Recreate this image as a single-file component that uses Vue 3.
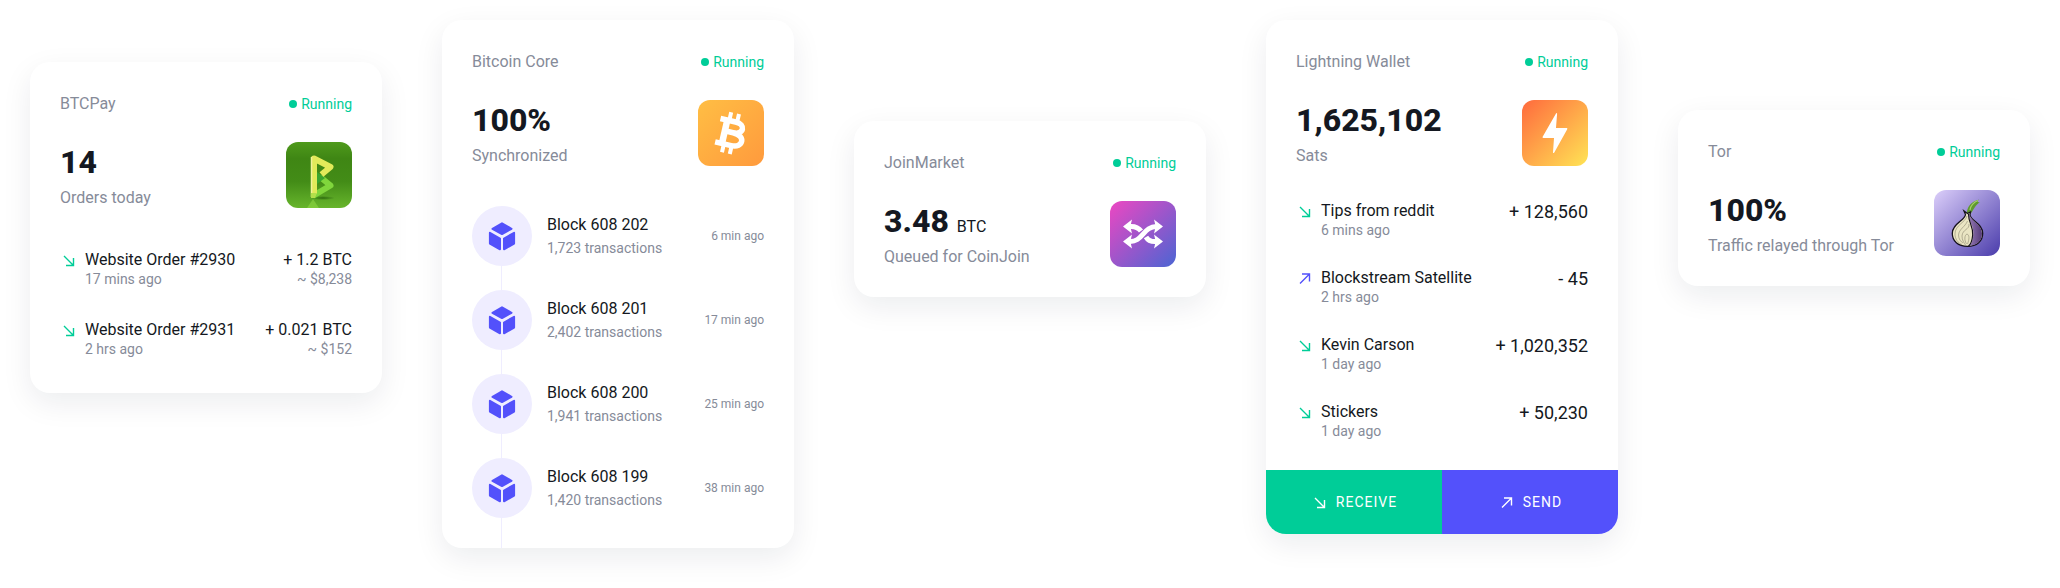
<script setup>
const orders = [
  { title: 'Website Order #2930', time: '17 mins ago', amount: '+ 1.2 BTC', fiat: '~ $8,238' },
  { title: 'Website Order #2931', time: '2 hrs ago', amount: '+ 0.021 BTC', fiat: '~ $152' },
]
const blocks = [
  { height: '608 202', count: '1,723', time: '6 min ago' },
  { height: '608 201', count: '2,402', time: '17 min ago' },
  { height: '608 200', count: '1,941', time: '25 min ago' },
  { height: '608 199', count: '1,420', time: '38 min ago' },
]
const payments = [
  { title: 'Tips from reddit', time: '6 mins ago', amount: '+ 128,560', incoming: true },
  { title: 'Blockstream Satellite', time: '2 hrs ago', amount: '- 45', incoming: false },
  { title: 'Kevin Carson', time: '1 day ago', amount: '+ 1,020,352', incoming: true },
  { title: 'Stickers', time: '1 day ago', amount: '+ 50,230', incoming: true },
]
const arrowIn = 'M4 4L13.5 13.5M13.5 6V13.5H6'
const arrowOut = 'M4 13.5L13.5 4M13.5 11.5V4H6'
</script>

<template>
  <main class="board">
    <section class="card btcpay">
      <header class="head">
        <h2 class="name">BTCPay</h2>
        <span class="status">Running</span>
      </header>
      <div class="hero">
        <div>
          <p class="figure">14</p>
          <p class="caption">Orders today</p>
        </div>
        <svg class="logo" viewBox="0 0 66 66" aria-hidden="true">
          <defs>
            <linearGradient id="pay-bg" x1="0" y1="0" x2="0" y2="1">
              <stop offset="0" stop-color="#4f9a1c" />
              <stop offset="0.25" stop-color="#3f8614" />
              <stop offset="0.6" stop-color="#438c17" />
              <stop offset="1" stop-color="#67b52c" />
            </linearGradient>
            <radialGradient id="pay-shadow">
              <stop offset="0" stop-color="#235c0a" stop-opacity="0.8" />
              <stop offset="1" stop-color="#235c0a" stop-opacity="0" />
            </radialGradient>
          </defs>
          <rect width="66" height="66" fill="url(#pay-bg)" />
          <ellipse cx="37" cy="56" rx="12" ry="2" fill="url(#pay-shadow)" />
          <path d="M27 57L33 66H21Z" fill="#8fd845" opacity="0.6" />
          <path d="M28.500 53L44.500 43.500L36 36.500" fill="none" stroke="#80d63c" stroke-width="6" stroke-linejoin="round" stroke-linecap="round" />
          <path d="M31 30L39 36L31 42Z" fill="#3aa52f" />
          <path d="M28 52V16.500L44.500 25L35.500 32.500" fill="none" stroke="#e2ea5a" stroke-width="6" stroke-linejoin="round" />
          <path d="M25.500 15V55" stroke="#f3f19a" stroke-width="1.500" />
          <path d="M25 51V56H29L31 51Z" fill="#b3e04b" />
        </svg>
      </div>
      <ul class="list">
        <li v-for="order in orders" :key="order.title" class="row">
          <svg class="arrow in" viewBox="0 0 18 18" aria-hidden="true"><path :d="arrowIn" /></svg>
          <div class="what">
            <p class="title">{{ order.title }}</p>
            <p class="note">{{ order.time }}</p>
          </div>
          <div class="value">
            <p class="title">{{ order.amount }}</p>
            <p class="note">{{ order.fiat }}</p>
          </div>
        </li>
      </ul>
    </section>

    <section class="card core">
      <header class="head">
        <h2 class="name">Bitcoin Core</h2>
        <span class="status">Running</span>
      </header>
      <div class="hero">
        <div>
          <p class="figure">100%</p>
          <p class="caption">Synchronized</p>
        </div>
        <svg class="logo" viewBox="0 0 66 66" aria-hidden="true">
          <defs>
            <linearGradient id="core-bg" x1="0" y1="0" x2="1" y2="1">
              <stop offset="0" stop-color="#ffbe44" />
              <stop offset="1" stop-color="#ff9a3d" />
            </linearGradient>
          </defs>
          <rect width="66" height="66" fill="url(#core-bg)" />
          <g transform="rotate(13 32 33)" fill="none" stroke="#fff">
            <path d="M19.500 21H35C46 21 46 32 35 32H27.500M35 32C48.500 32 48.500 45 36 45H19.500" stroke-width="5.500" />
            <path d="M26.500 21V45" stroke-width="6.500" />
            <path d="M28.500 12.500V22M36.500 12.500V22M28.500 44V53.500M36.500 44V53.500" stroke-width="4" />
          </g>
        </svg>
      </div>
      <ul class="chain">
        <li v-for="block in blocks" :key="block.height" class="block">
          <span class="node">
            <svg viewBox="0 0 28 30" aria-hidden="true">
              <g fill="#5351fb" stroke="#5351fb" stroke-width="2" stroke-linejoin="round">
                <path d="M14 2.300L23.500 7.800L14 13L4.500 7.800Z" />
                <path d="M1.900 11.800L12 17.500V28.300L1.900 22.600Z" />
                <path d="M26.100 11.800L16 17.500V28.300L26.100 22.600Z" />
              </g>
            </svg>
          </span>
          <div class="what">
            <p class="title">Block {{ block.height }}</p>
            <p class="note">{{ block.count }} transactions</p>
          </div>
          <time class="age">{{ block.time }}</time>
        </li>
      </ul>
    </section>

    <section class="card join">
      <header class="head">
        <h2 class="name">JoinMarket</h2>
        <span class="status">Running</span>
      </header>
      <div class="hero">
        <div>
          <p class="figure">3.48 <span class="unit">BTC</span></p>
          <p class="caption">Queued for CoinJoin</p>
        </div>
        <svg class="logo" viewBox="0 0 66 66" aria-hidden="true">
          <defs>
            <linearGradient id="join-bg" x1="0" y1="0" x2="1" y2="1">
              <stop offset="0" stop-color="#ed47c2" />
              <stop offset="1" stop-color="#4b65d3" />
            </linearGradient>
          </defs>
          <rect width="66" height="66" fill="url(#join-bg)" />
          <g fill="none" stroke="#fff" stroke-width="5">
            <path d="M19 25.500C24 25 28.500 26.500 31 30" />
            <path d="M36 36C38 39.500 42 41 47 40.500" />
            <path d="M19 40.500C33 41.500 33 25 47 25.500" />
          </g>
          <g fill="#fff">
            <path d="M13 25.500L22 18.500L20.300 25.500L22 32.500Z" />
            <path d="M13 40.500L22 33.500L20.300 40.500L22 47.500Z" />
            <path d="M53 25.500L44 18.500L45.700 25.500L44 32.500Z" />
            <path d="M53 40.500L44 33.500L45.700 40.500L44 47.500Z" />
          </g>
        </svg>
      </div>
    </section>

    <section class="card wallet">
      <header class="head">
        <h2 class="name">Lightning Wallet</h2>
        <span class="status">Running</span>
      </header>
      <div class="hero">
        <div>
          <p class="figure">1,625,102</p>
          <p class="caption">Sats</p>
        </div>
        <svg class="logo" viewBox="0 0 66 66" aria-hidden="true">
          <defs>
            <linearGradient id="wallet-bg" x1="0" y1="0" x2="1" y2="1">
              <stop offset="0" stop-color="#ff6a3d" />
              <stop offset="1" stop-color="#ffe455" />
            </linearGradient>
          </defs>
          <rect width="66" height="66" fill="url(#wallet-bg)" />
          <path d="M34 13.500C34.500 12.500 35.200 12.800 35.100 13.800L34 28H44.300C45.300 28 45.600 28.500 45.100 29.400L32.300 52.500C31.700 53.500 31 53.200 31 52.200L32 37.900H21.500C20.500 37.900 20.300 37.300 20.800 36.500Z" fill="#fff" />
        </svg>
      </div>
      <ul class="list">
        <li v-for="payment in payments" :key="payment.title" class="row">
          <svg :class="['arrow', payment.incoming ? 'in' : 'out']" viewBox="0 0 18 18" aria-hidden="true">
            <path :d="payment.incoming ? arrowIn : arrowOut" />
          </svg>
          <div class="what">
            <p class="title">{{ payment.title }}</p>
            <p class="note">{{ payment.time }}</p>
          </div>
          <p class="sats">{{ payment.amount }}</p>
        </li>
      </ul>
      <div class="actions">
        <button type="button" class="action receive">
          <svg class="arrow" viewBox="0 0 18 18" aria-hidden="true"><path :d="arrowIn" /></svg>RECEIVE
        </button>
        <button type="button" class="action send">
          <svg class="arrow" viewBox="0 0 18 18" aria-hidden="true"><path :d="arrowOut" /></svg>SEND
        </button>
      </div>
    </section>

    <section class="card tor">
      <header class="head">
        <h2 class="name">Tor</h2>
        <span class="status">Running</span>
      </header>
      <div class="hero">
        <div>
          <p class="figure">100%</p>
          <p class="caption">Traffic relayed through Tor</p>
        </div>
        <svg class="logo" viewBox="0 0 66 66" aria-hidden="true">
          <defs>
            <linearGradient id="tor-bg" x1="0" y1="0" x2="1" y2="1">
              <stop offset="0" stop-color="#dccffa" />
              <stop offset="1" stop-color="#4a3cab" />
            </linearGradient>
            <linearGradient id="tor-skin" x1="0" y1="0" x2="1" y2="0">
              <stop offset="0" stop-color="#9478b5" />
              <stop offset="1" stop-color="#553b78" />
            </linearGradient>
          </defs>
          <rect width="66" height="66" fill="url(#tor-bg)" />
          <path d="M33 24C32.500 17 37 12 45 9.500C42.500 12 44 12.500 46 12C41.500 15 40 19 36.500 24Z" fill="#5f9a30" />
          <path d="M36 20C36 16 40 12 44 10.500" fill="none" stroke="#a6cf6a" stroke-width="1.200" />
          <path d="M30 21L31.500 24.500C31 30.500 18.300 33.500 18.300 43.500C18.300 51 24 56.300 33.500 56.300C43 56.300 48.700 51 48.700 43.500C48.700 33.500 37 31 36 25L36.500 22L33.500 23.500Z" fill="#eae5c3" stroke="#16121d" stroke-width="1.300" />
          <path d="M35 25C35.500 33 40 36 39.300 45C38.500 52 37 55 35 55.700C43 55.500 48 51 48 43.500C48 34 37 31.500 35.700 25Z" fill="url(#tor-skin)" />
          <path d="M34.500 24C34.500 33 39.300 36 38.700 45C38 52 36 55 34.500 56" fill="none" stroke="#16121d" stroke-width="1.200" />
          <g fill="none" stroke="#8d8871" stroke-width="0.600">
            <path d="M33 26C31 33 21 35 21 44C21 49 24 53 28 54.500" />
            <path d="M33.500 31C31 37 25 39 24.500 45C24.500 49 27 52 29 53" />
            <path d="M35 34C35.500 40 28.500 39 28 46C28 50 30 53 31.500 55" />
            <path d="M32.500 54C30 50 30.500 45 33 44C35.500 45 35.500 49 33.500 54" />
          </g>
        </svg>
      </div>
    </section>
  </main>
</template>

<style>
body {
  margin: 0;
  background: #fff;
}
</style>

<style scoped>
.board {
  display: grid;
  grid-template-columns: repeat(5, minmax(0, 1fr));
  align-items: start;
  gap: 60px;
  padding: 20px 30px 40px;
  color: #141821;
  font-family: Roboto, "Liberation Sans", sans-serif;
  font-size: 16px;
  line-height: 20px;
}
.card {
  padding: 30px;
  border-radius: 20px;
  background: #fff;
  box-shadow: 0 10px 30px rgba(10, 20, 50, 0.08);
  overflow: hidden;
}
.btcpay {
  margin-top: 42px;
}
.join {
  margin-top: 101px;
}
.tor {
  margin-top: 90px;
}
h2,
p,
ul {
  margin: 0;
  padding: 0;
  list-style: none;
}
.head,
.hero {
  display: flex;
  justify-content: space-between;
}
.head {
  align-items: center;
  line-height: 24px;
}
.name {
  color: #868b99;
  font-size: 16px;
  font-weight: 400;
}
.status {
  display: flex;
  align-items: center;
  gap: 4px;
  color: #00cd98;
  font-size: 14px;
}
.status::before {
  content: "";
  width: 8px;
  height: 8px;
  border-radius: 50%;
  background: currentColor;
}
.hero {
  margin-top: 26px;
}
.figure {
  font-size: 32px;
  font-weight: 800;
  line-height: 40px;
}
.unit {
  font-size: 16px;
  font-weight: 400;
  line-height: 20px;
}
.caption {
  margin-top: 6px;
  color: #868b99;
}
.logo {
  flex: none;
  width: 66px;
  height: 66px;
  border-radius: 12px;
}
.list {
  display: grid;
  gap: 32px;
  margin-top: 42px;
  padding-bottom: 5px;
}
.wallet .list {
  gap: 29px;
  margin-top: 35px;
  padding-bottom: 30px;
}
.row {
  display: flex;
}
.arrow {
  flex: none;
  width: 18px;
  height: 18px;
  margin: 2px 7px 0 0;
  fill: none;
  stroke: currentColor;
  stroke-width: 1.4;
}
.in {
  color: #00cd98;
}
.out {
  color: #5351fb;
}
.what {
  flex: 1;
  min-width: 0;
}
.note {
  color: #868b99;
  font-size: 14px;
  line-height: 18px;
}
.value {
  text-align: right;
}
.sats {
  font-size: 18px;
  line-height: 22px;
}
.chain {
  margin-top: 40px;
}
.block {
  display: flex;
  align-items: center;
  gap: 15px;
}
.block + .block {
  margin-top: 24px;
}
.node {
  position: relative;
  display: grid;
  place-items: center;
  width: 60px;
  height: 60px;
  border-radius: 50%;
  background: #efedff;
}
.node::after {
  content: "";
  position: absolute;
  top: 60px;
  left: 29px;
  width: 1px;
  height: 30px;
  background: #efedff;
}
.block:not(:last-child) .node::after {
  height: 24px;
}
.node svg {
  width: 28px;
  height: 30px;
}
.block .note {
  margin-top: 4px;
}
.age {
  color: #868b99;
  font-size: 12px;
}
.wallet {
  padding-bottom: 0;
}
.actions {
  display: grid;
  grid-template-columns: 1fr 1fr;
  margin: 0 -30px;
}
.action {
  display: flex;
  align-items: center;
  justify-content: center;
  height: 64px;
  padding: 0;
  border: 0;
  color: #fff;
  font: inherit;
  font-size: 14px;
  letter-spacing: 1px;
  cursor: pointer;
}
.receive {
  background: #00cd98;
}
.send {
  background: #5351fb;
}
</style>
